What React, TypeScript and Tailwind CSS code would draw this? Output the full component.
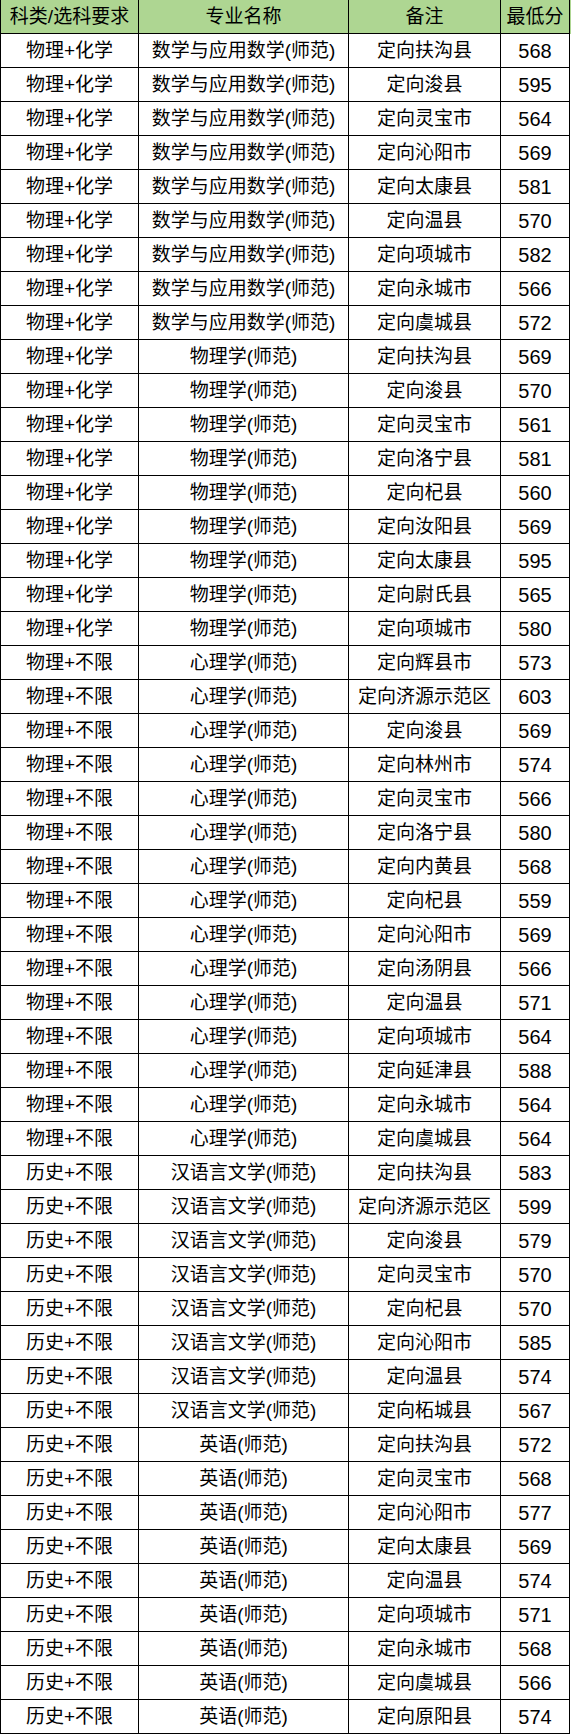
const rows: [string, string, string, number][] = [
  ["物理+化学", "数学与应用数学(师范)", "定向扶沟县", 568],
  ["物理+化学", "数学与应用数学(师范)", "定向浚县", 595],
  ["物理+化学", "数学与应用数学(师范)", "定向灵宝市", 564],
  ["物理+化学", "数学与应用数学(师范)", "定向沁阳市", 569],
  ["物理+化学", "数学与应用数学(师范)", "定向太康县", 581],
  ["物理+化学", "数学与应用数学(师范)", "定向温县", 570],
  ["物理+化学", "数学与应用数学(师范)", "定向项城市", 582],
  ["物理+化学", "数学与应用数学(师范)", "定向永城市", 566],
  ["物理+化学", "数学与应用数学(师范)", "定向虞城县", 572],
  ["物理+化学", "物理学(师范)", "定向扶沟县", 569],
  ["物理+化学", "物理学(师范)", "定向浚县", 570],
  ["物理+化学", "物理学(师范)", "定向灵宝市", 561],
  ["物理+化学", "物理学(师范)", "定向洛宁县", 581],
  ["物理+化学", "物理学(师范)", "定向杞县", 560],
  ["物理+化学", "物理学(师范)", "定向汝阳县", 569],
  ["物理+化学", "物理学(师范)", "定向太康县", 595],
  ["物理+化学", "物理学(师范)", "定向尉氏县", 565],
  ["物理+化学", "物理学(师范)", "定向项城市", 580],
  ["物理+不限", "心理学(师范)", "定向辉县市", 573],
  ["物理+不限", "心理学(师范)", "定向济源示范区", 603],
  ["物理+不限", "心理学(师范)", "定向浚县", 569],
  ["物理+不限", "心理学(师范)", "定向林州市", 574],
  ["物理+不限", "心理学(师范)", "定向灵宝市", 566],
  ["物理+不限", "心理学(师范)", "定向洛宁县", 580],
  ["物理+不限", "心理学(师范)", "定向内黄县", 568],
  ["物理+不限", "心理学(师范)", "定向杞县", 559],
  ["物理+不限", "心理学(师范)", "定向沁阳市", 569],
  ["物理+不限", "心理学(师范)", "定向汤阴县", 566],
  ["物理+不限", "心理学(师范)", "定向温县", 571],
  ["物理+不限", "心理学(师范)", "定向项城市", 564],
  ["物理+不限", "心理学(师范)", "定向延津县", 588],
  ["物理+不限", "心理学(师范)", "定向永城市", 564],
  ["物理+不限", "心理学(师范)", "定向虞城县", 564],
  ["历史+不限", "汉语言文学(师范)", "定向扶沟县", 583],
  ["历史+不限", "汉语言文学(师范)", "定向济源示范区", 599],
  ["历史+不限", "汉语言文学(师范)", "定向浚县", 579],
  ["历史+不限", "汉语言文学(师范)", "定向灵宝市", 570],
  ["历史+不限", "汉语言文学(师范)", "定向杞县", 570],
  ["历史+不限", "汉语言文学(师范)", "定向沁阳市", 585],
  ["历史+不限", "汉语言文学(师范)", "定向温县", 574],
  ["历史+不限", "汉语言文学(师范)", "定向柘城县", 567],
  ["历史+不限", "英语(师范)", "定向扶沟县", 572],
  ["历史+不限", "英语(师范)", "定向灵宝市", 568],
  ["历史+不限", "英语(师范)", "定向沁阳市", 577],
  ["历史+不限", "英语(师范)", "定向太康县", 569],
  ["历史+不限", "英语(师范)", "定向温县", 574],
  ["历史+不限", "英语(师范)", "定向项城市", 571],
  ["历史+不限", "英语(师范)", "定向永城市", 568],
  ["历史+不限", "英语(师范)", "定向虞城县", 566],
  ["历史+不限", "英语(师范)", "定向原阳县", 574],
];

function Row({ cells, head }: { cells: (string | number)[]; head?: boolean }) {
  const cell = "flex items-center justify-center border-b border-r border-black whitespace-nowrap";
  return (
    <div className={`flex h-[34px] ${head ? "bg-[#aed692]" : "bg-white"}`}>
      <div className={`${cell} w-[139px] border-l`}>{cells[0]}</div>
      <div className={`${cell} w-[210px]`}>{cells[1]}</div>
      <div className={`${cell} w-[152px]`}>{cells[2]}</div>
      <div className={`${cell} w-[69px] ${head ? "" : "text-[20px]"}`}>{cells[3]}</div>
    </div>
  );
}

export default function App() {
  return (
    <div className="w-[571px] bg-white font-['Liberation_Sans','Noto_Sans_CJK_SC',sans-serif] text-[19px] leading-none text-black">
      <Row head cells={["科类/选科要求", "专业名称", "备注", "最低分"]} />
      {rows.map((r, i) => (
        <Row key={i} cells={r} />
      ))}
    </div>
  );
}
